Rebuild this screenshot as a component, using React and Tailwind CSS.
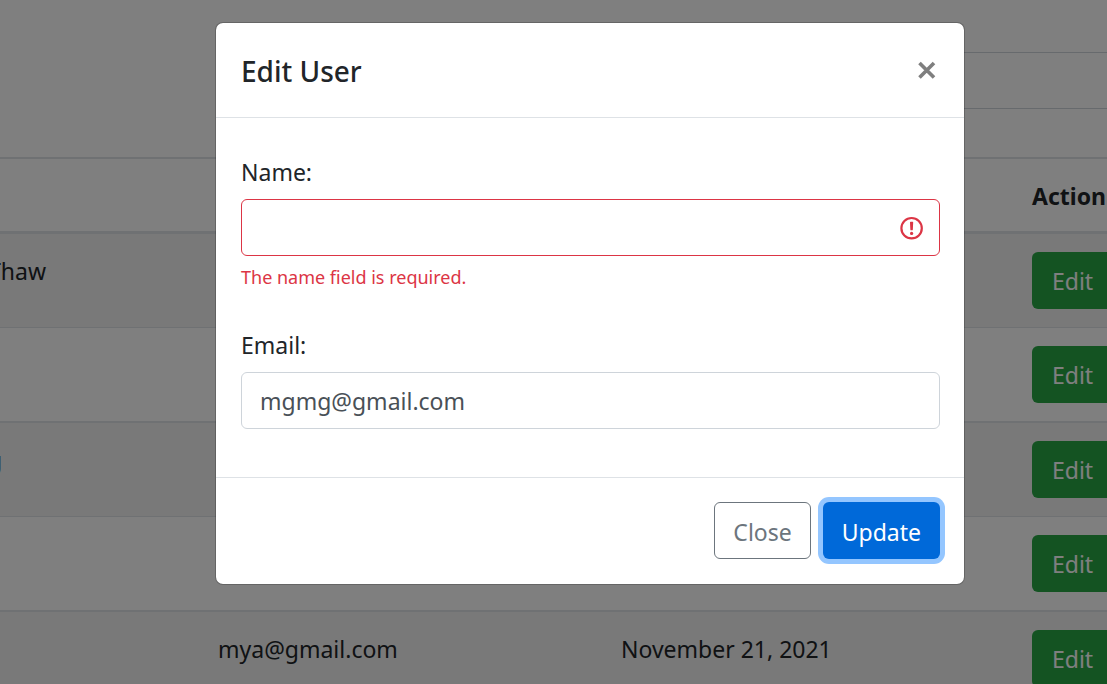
import { useState } from "react";

const users = [
  { name: "Thaw", email: "", date: "" },
  { name: "", email: "", date: "" },
  { name: "g", email: "", date: "" },
  { name: "", email: "", date: "" },
  { name: "", email: "mya@gmail.com", date: "November 21, 2021" },
];

function UserTable() {
  return (
    <div className="-ml-3">
      <div className="flex justify-end pt-[52px] pb-12">
        <input
          type="search"
          aria-label="Search users"
          className="h-[57px] w-3/4 border-y border-[#ced4da] bg-white px-5 outline-none"
        />
      </div>
      <table className="w-full table-fixed border-collapse text-left whitespace-nowrap">
        <colgroup>
          <col className="w-[212px]" />
          <col className="w-[403px]" />
          <col className="w-[411px]" />
          <col />
        </colgroup>
        <thead>
          <tr className="h-[74px] border-t-2 border-b-3 border-[#dee2e6]">
            <th></th>
            <th></th>
            <th></th>
            <th className="pt-0.5 pl-[18px] font-bold">Action</th>
          </tr>
        </thead>
        <tbody>
          {users.map((user, i) => (
            <tr
              key={i}
              className="border-[#dee2e6] align-top odd:bg-[#f2f2f2] even:border-t even:border-b-2"
            >
              <td className="py-[19px]">{user.name}</td>
              <td className="px-[18px] py-[19px]">{user.email}</td>
              <td className="px-[18px] py-[19px]">{user.date}</td>
              <td className="py-[18px] pl-[18px]">
                <button
                  type="button"
                  className="block h-[57px] rounded-md bg-[#28a745] px-5 pt-0.5 text-white"
                >
                  Edit
                </button>
              </td>
            </tr>
          ))}
        </tbody>
      </table>
    </div>
  );
}

function ErrorIcon() {
  return (
    <svg
      viewBox="0 0 12 12"
      className="pointer-events-none absolute inset-y-0 right-4 my-auto size-6"
      fill="#dc3545"
      stroke="#dc3545"
      aria-hidden="true"
    >
      <circle cx="5.8" cy="6.1" r="5.1" strokeWidth="1.1" fill="none" />
      <path d="M5.3 3.2h1l-.2 3.6h-.6z" strokeWidth=".6" strokeLinejoin="round" />
      <circle cx="5.8" cy="8.7" r=".8" stroke="none" />
    </svg>
  );
}

function EditDialog() {
  const [name, setName] = useState("");
  const [email, setEmail] = useState("mgmg@gmail.com");
  return (
    <form
      role="dialog"
      aria-labelledby="dialog-title"
      onSubmit={(e) => e.preventDefault()}
      className="w-full max-w-[750px] rounded-lg border border-black/20 bg-white bg-clip-padding"
    >
      <header className="flex items-center justify-between border-b border-[#dee2e6] pt-[26px] pr-6 pb-6 pl-[25px]">
        <h5 id="dialog-title" className="text-[28px] leading-[44px] font-medium">
          Edit User
        </h5>
        <button type="button" aria-label="Close dialog" className="p-[3px] text-[#7f7f7f]">
          <svg viewBox="0 0 20 20" className="size-5" stroke="currentColor" strokeWidth="3.6" fill="none">
            <path d="M2.5 2l14.5 14.5M17 2L2.5 16.5" />
          </svg>
        </button>
      </header>
      <div className="pt-9 pr-6 pb-12 pl-[25px]">
        <label htmlFor="name" className="mb-[9px] block leading-9">
          Name:
        </label>
        <div className="relative">
          <input
            id="name"
            value={name}
            onChange={(e) => setName(e.target.value)}
            aria-invalid="true"
            aria-describedby="name-error"
            className="block h-[57px] w-full rounded-md border border-[#dc3545] px-[18px] text-[#495057] outline-none"
          />
          <ErrorIcon />
        </div>
        <p id="name-error" className="mt-[7px] text-lg leading-7 text-[#dc3545]">
          The name field is required.
        </p>
        <label htmlFor="email" className="mt-9 mb-[9px] block leading-9">
          Email:
        </label>
        <input
          id="email"
          type="email"
          value={email}
          onChange={(e) => setEmail(e.target.value)}
          className="block h-[57px] w-full rounded-md border border-[#ced4da] px-[18px] text-[#495057] outline-none"
        />
      </div>
      <footer className="flex justify-end gap-3 border-t border-[#dee2e6] pt-6 pr-6 pb-[25px]">
        <button
          type="button"
          className="h-[57px] rounded-md border border-[#6c757d] px-[18px] pt-0.5 text-[#6c757d]"
        >
          Close
        </button>
        <button
          type="submit"
          className="h-[57px] rounded-md bg-[#0069d9] px-[19px] pt-0.5 text-white ring-[5px] ring-[#94c6ff]"
        >
          Update
        </button>
      </footer>
    </form>
  );
}

export default function App() {
  return (
    <main className="relative h-screen overflow-hidden bg-white font-['Noto_Sans',sans-serif] text-[23px] leading-9 text-[#212529]">
      <UserTable />
      <div className="absolute inset-0 flex items-start justify-center bg-black/50 pt-[22px] pl-[73px]">
        <EditDialog />
      </div>
    </main>
  );
}
